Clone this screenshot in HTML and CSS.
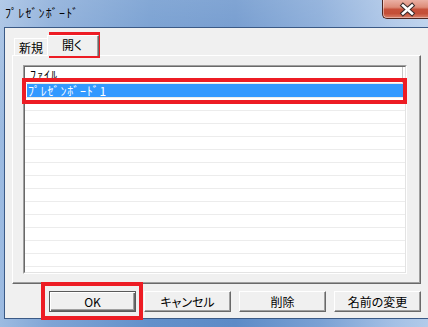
FILE: index.html
```html
<!DOCTYPE html>
<html lang="ja">
<head>
<meta charset="utf-8">
<title>ﾌﾟﾚｾﾞﾝﾎﾞｰﾄﾞ</title>
<link rel="stylesheet" href="styles.css">
</head>
<body>
<div class="window">
  <div class="titlebar">
    <span class="title">ﾌﾟﾚｾﾞﾝﾎﾞｰﾄﾞ</span>
    <div class="close">
      <svg width="46" height="19" viewBox="0 0 46 19">
        <path d="M21 5.5 L30 13.5 M30 5.5 L21 13.5" stroke="#3a2a2a" stroke-width="4.6" stroke-linecap="square"/>
        <path d="M21 5.5 L30 13.5 M30 5.5 L21 13.5" stroke="#ffffff" stroke-width="2.6" stroke-linecap="square"/>
      </svg>
    </div>
  </div>
  <div class="client">
    <div class="tabs">
      <div class="tab">新規</div>
      <div class="tab active">開く</div>
    </div>
    <div class="panel">
      <div class="list">
        <div class="list-inner">
          <div class="list-header"><span class="hcell">ﾌｧｲﾙ</span></div>
          <div class="row selected">ﾌﾟﾚｾﾞﾝﾎﾞｰﾄﾞ1</div>
          <div class="row"></div>
          <div class="row"></div>
          <div class="row"></div>
          <div class="row"></div>
          <div class="row"></div>
          <div class="row"></div>
          <div class="row"></div>
          <div class="row"></div>
          <div class="row"></div>
          <div class="row"></div>
          <div class="row"></div>
          <div class="row"></div>
          <div class="row"></div>
          <div class="row"></div>
        </div>
      </div>
    </div>
    <div class="buttons">
      <button class="btn default">OK</button>
      <button class="btn">キャンセル</button>
      <button class="btn">削除</button>
      <button class="btn">名前の変更</button>
    </div>
  </div>
  <div class="mark mark-tab"></div>
  <div class="mark mark-row"></div>
  <div class="mark mark-ok"></div>
</div>
</body>
</html>
```

FILE: styles.css
```css
* { box-sizing: border-box; }
html, body { margin: 0; padding: 0; }
body {
  width: 428px;
  height: 327px;
  overflow: hidden;
  font-family: "Noto Sans CJK JP", "Noto Sans", sans-serif;
  font-size: 12px;
  color: #000;
}
.window {
  position: relative;
  width: 428px;
  height: 327px;
  background:
    linear-gradient(180deg, rgba(255,255,255,0.22) 0%, rgba(255,255,255,0) 40%),
    linear-gradient(90deg, #9dbbe1 0%, #7ea4d5 12%, #6290ca 35%, #5d8bc7 55%, #7aa1d4 75%, #a4c0e5 92%, #b2cbea 100%);
  overflow: hidden;
}
.titlebar {
  height: 27px;
  display: flex;
  align-items: flex-start;
}
.title {
  padding: 5px 0 0 5px;
  line-height: 16px;
  font-size: 12px;
  letter-spacing: 1.2px;
  color: #000;
}
.close {
  margin-left: auto;
  width: 46px;
  height: 19px;
  border-left: 1px solid #4d2621;
  border-bottom: 1px solid #4d2621;
  border-radius: 0 0 0 5px;
  background: linear-gradient(180deg, #eab0a4 0%, #dd8c79 40%, #c6513b 52%, #c44f38 75%, #d9826c 100%);
  box-shadow: inset 1px 0 0 rgba(255,255,255,0.45), inset 0 -1px 0 rgba(255,255,255,0.35);
  overflow: hidden;
}
.close svg { display: block; margin-left: -1px; }
.client {
  margin-left: 4px;
  height: 292px;
  background: #f0f0f0;
  border-top: 1px solid #3b5a86;
  border-left: 1px solid #3b5a86;
  border-bottom: 1px solid #3b5a86;
  display: flex;
  flex-direction: column;
}
.tabs {
  height: 27px;
  display: flex;
  align-items: flex-end;
  padding-left: 9px;
}
.tab {
  width: 35px;
  height: 17px;
  padding: 1px 0 0 4px;
  line-height: 15px;
  border: 1px solid;
  border-color: #fff #696969 transparent #fff;
  border-bottom: none;
  box-shadow: inset -1px 0 0 #a0a0a0;
  background: #f0f0f0;
  font-feature-settings: "palt";
}
.tab.active {
  width: 52px;
  height: 21px;
  margin-left: -2px;
  margin-bottom: -1px;
  padding: 1px 0 0 14px;
  position: relative;
  z-index: 1;
}
.panel {
  margin: 0 7px;
  height: 229px;
  border: 1px solid;
  border-color: #fff #696969 #696969 #fff;
  box-shadow: inset -1px -1px 0 #a0a0a0;
  padding: 9px 13px 9px 10px;
  display: flex;
}
.list {
  flex: 1;
  border: 1px solid;
  border-color: #a0a0a0 #fff #fff #a0a0a0;
  background: #fff;
}
.list-inner {
  height: 100%;
  border: 1px solid;
  border-color: #696969 #e3e3e3 #e3e3e3 #696969;
  overflow: hidden;
}
.list-header {
  height: 17px;
  border-bottom: 1px solid #e8e8e8;
  display: flex;
}
.hcell {
  width: 378px;
  padding-left: 5px;
  line-height: 15px;
  letter-spacing: 1px;
  border-right: 1px solid #c8c8c8;
}
.row {
  height: 13px;
  border-top: 1px solid #ececec;
  line-height: 12px;
  white-space: nowrap;
}
.row.selected {
  margin: 0 2px;
  padding-left: 1px;
  background: #3399ff;
  border-top-color: #3399ff;
  color: #fff;
  letter-spacing: 0.8px;
}
.buttons {
  display: flex;
  gap: 8px;
  padding-left: 44px;
  margin-top: 7px;
}
.btn {
  width: 87px;
  height: 21px;
  margin: 0;
  padding: 0;
  border: 1px solid;
  border-color: #fff #696969 #696969 #fff;
  box-shadow: inset -1px -1px 0 #a0a0a0;
  background: #f0f0f0;
  font-family: inherit;
  font-size: 12px;
  font-feature-settings: "palt";
  color: #000;
  line-height: 16px;
  display: flex;
  align-items: center;
  justify-content: center;
}
.btn.default {
  border-color: #5a5a5a;
  box-shadow: inset 1px 1px 0 #fff, inset -1px -1px 0 #696969, inset -2px -2px 0 #a0a0a0;
}
.mark {
  position: absolute;
  border: 4px solid #ed1c24;
}
.mark-tab { left: 49px; top: 32px; width: 51px; height: 26px; }
.mark-row { left: 22px; top: 78px; width: 385px; height: 26px; }
.mark-ok { left: 41px; top: 282px; width: 102px; height: 38px; }
```
